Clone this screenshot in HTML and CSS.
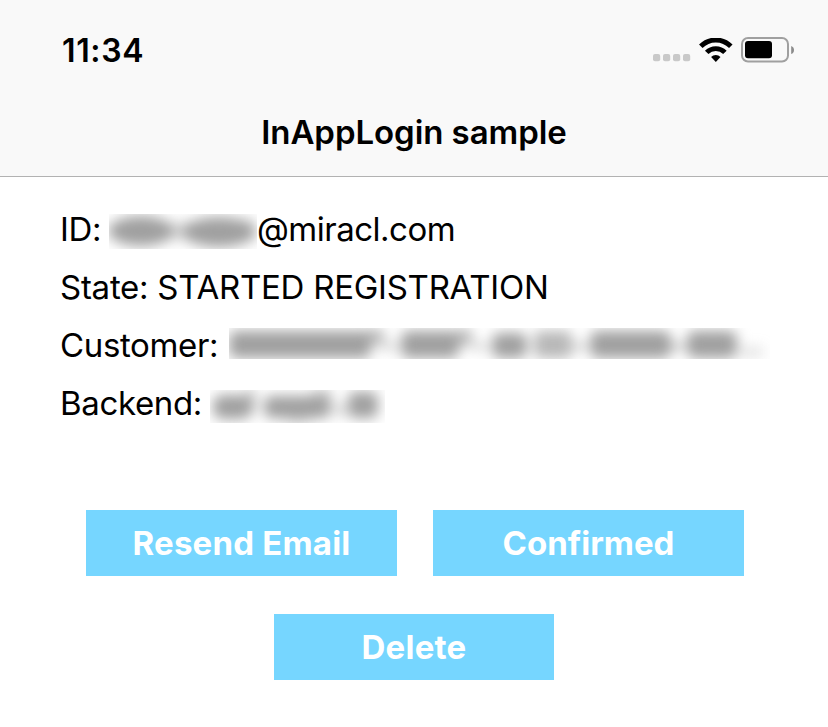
FILE: index.html
```html
<!DOCTYPE html>
<html lang="en">
<head>
<meta charset="utf-8">
<title>InAppLogin sample</title>
<link rel="stylesheet" href="styles.css">
</head>
<body>
<header class="top">
  <div class="status">
    <span class="time">11:34</span>
    <div class="indicators">
      <svg class="cell" width="38" height="8" viewBox="0 0 38 8" fill="#c9c9c9"><rect width="7.2" height="7.2" rx="2"/><rect x="10" width="7.2" height="7.2" rx="2"/><rect x="20" width="7.2" height="7.2" rx="2"/><rect x="30" width="7.2" height="7.2" rx="2"/></svg>
      <svg class="wifi" width="34" height="25" viewBox="0 0 34 25"><path d="M1.8 8.3a21 21 0 0 1 30 0M7.7 14.4a12.8 12.8 0 0 1 18.2 0" fill="none" stroke="#000" stroke-width="4.9"/><path d="M12.1 18.9a6.6 6.6 0 0 1 9.4 0L16.8 23.9Z"/></svg>
      <svg class="battery" width="54" height="26" viewBox="0 0 54 26"><rect x="1" y="1" width="46" height="23.5" rx="6" fill="none" stroke="#a0a0a0" stroke-width="2"/><rect x="4" y="4" width="27" height="17.2" rx="3"/><path d="M50.2 9v8q2.8-1 2.8-4t-2.8-4Z" fill="#8c8c8c"/></svg>
    </div>
  </div>
  <h1 class="title">InAppLogin sample</h1>
</header>
<main>
  <div class="details">
    <div class="row"><span class="label id">ID:</span><svg class="redacted r-id" viewBox="109 214 148 35"><g class="soft"><ellipse cx="141" cy="231" rx="33" ry="15"/><rect x="160" y="222" width="30" height="18" opacity=".4"/><ellipse cx="219" cy="232" rx="37" ry="15"/><rect x="235" y="219" width="20" height="22" opacity=".4"/></g></svg><span class="mail">@miracl.com</span></div>
    <div class="row"><span class="state">State: STARTED REGISTRATION</span></div>
    <div class="row"><span class="label customer">Customer:</span><svg class="redacted r-customer" viewBox="229 328 541 31"><g class="soft"><rect x="229" y="331" width="142" height="27" rx="7"/><rect x="367" y="329" width="17" height="16" opacity=".7"/><rect x="382" y="343" width="15" height="7" opacity=".5"/><rect x="401" y="331" width="58" height="27" rx="8"/><rect x="456" y="329" width="16" height="17" opacity=".7"/><rect x="473" y="343" width="14" height="7" opacity=".5"/><rect x="492" y="333" width="35" height="25" rx="8"/><rect x="534" y="331" width="38" height="27" opacity=".75" rx="6"/><rect x="574" y="343" width="12" height="7" opacity=".6"/><rect x="590" y="331" width="81" height="27" rx="8"/><rect x="671" y="343" width="14" height="7" opacity=".6"/><rect x="687" y="331" width="50" height="27" rx="8"/><rect x="740" y="347" width="23" height="10" opacity=".3"/></g></svg></div>
    <div class="row"><span class="label backend">Backend:</span><svg class="redacted r-backend" viewBox="210 390 175 33"><g class="soft"><rect x="213" y="395" width="38" height="24" rx="9"/><rect x="247" y="389" width="8" height="25" opacity=".7"/><rect x="264" y="396" width="66" height="22" rx="7"/><rect x="286" y="404" width="24" height="20" opacity=".4"/><rect x="312" y="389" width="20" height="24" opacity=".5"/><rect x="336" y="404" width="9" height="12" opacity=".5"/><rect x="348" y="392" width="30" height="26" rx="7"/></g></svg></div>
  </div>
  <div class="actions">
    <button class="btn"><span class="resend">Resend Email</span></button>
    <button class="btn"><span class="confirmed">Confirmed</span></button>
    <button class="btn small"><span class="delete">Delete</span></button>
  </div>
</main>
</body>
</html>
```
FILE: styles.css
```css
* { box-sizing: border-box; }
body { margin: 0; height: 727px; background: #fff; color: #000; font-family: Inter, "Liberation Sans", sans-serif; font-size: 33px; overflow: hidden; }
.top { height: 177px; background: #f9f9f9; border-bottom: 1px solid #b2b2b2; }
.status { height: 100px; padding: 0 33px 0 62px; display: flex; align-items: center; justify-content: space-between; }
.time { font-weight: 600; font-size: 32px; letter-spacing: .65px; }
.indicators { display: flex; align-items: center; }
.cell { margin: 15px 8px 0 0; }
.wifi { margin-right: 8px; }
.title { margin: 0; height: 65px; line-height: 65px; text-align: center; font-size: 33px; font-weight: 600; letter-spacing: -.06px; }
.details { padding: 23px 0 0 60px; }
.row { height: 58px; display: flex; align-items: center; white-space: nowrap; line-height: 58px; }
.label { flex: none; letter-spacing: -.35px; }
.state { letter-spacing: -.26px; }
.mail { letter-spacing: -.5px; }
.id { width: 49px; }
.customer { width: 169px; }
.backend { width: 150px; }
.redacted { flex: none; overflow: hidden; }
.soft { fill: #a0a0a0; filter: blur(6.5px); }
.r-id { width: 148px; height: 35px; margin-top: 4px; }
.r-customer { width: 541px; height: 31px; margin-top: -3px; }
.r-backend { width: 175px; height: 33px; margin-top: 7px; }
.actions { display: flex; flex-wrap: wrap; justify-content: center; gap: 38px 36px; padding: 78px 0 0 2px; }
.btn { width: 311px; height: 66px; padding: 0; border: 0; background: #76d6ff; color: #fff; font: 650 33px Inter, "Liberation Sans", sans-serif; letter-spacing: .2px; }
.confirmed { letter-spacing: 0; }
.delete { letter-spacing: .25px; }
.small { width: 280px; margin-right: 2px; }
```
